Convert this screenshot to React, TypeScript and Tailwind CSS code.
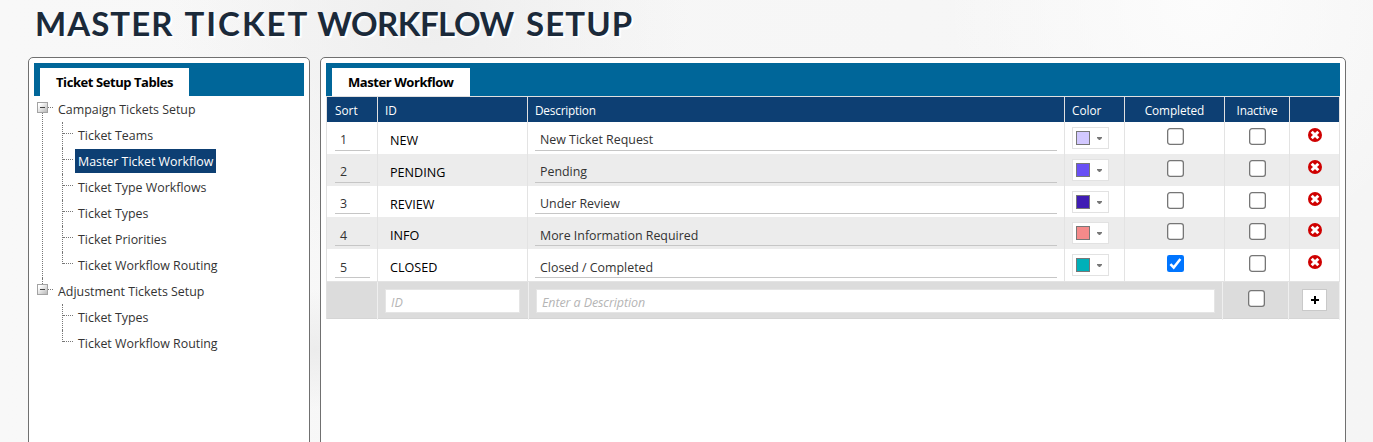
import React from "react";

type Child = { label: string; active?: boolean };

const campaign: Child[] = [
  { label: "Ticket Teams" },
  { label: "Master Ticket Workflow", active: true },
  { label: "Ticket Type Workflows" },
  { label: "Ticket Types" },
  { label: "Ticket Priorities" },
  { label: "Ticket Workflow Routing" },
];

const adjustment: Child[] = [{ label: "Ticket Types" }, { label: "Ticket Workflow Routing" }];

const rows = [
  { id: "NEW", text: "New Ticket Request", color: "bg-[#d2c8ff]", done: false, h: "h-[32px]", line: "leading-[36px]" },
  { id: "PENDING", text: "Pending", color: "bg-[#6950f5]", done: false, h: "h-[32px]", line: "leading-[36px]" },
  { id: "REVIEW", text: "Under Review", color: "bg-[#3f1cb4]", done: false, h: "h-[31px]", line: "leading-[36px]" },
  { id: "INFO", text: "More Information Required", color: "bg-[#f58a8a]", done: false, h: "h-[32px]", line: "leading-[38px]" },
  { id: "CLOSED", text: "Closed / Completed", color: "bg-[#00b0b9]", done: true, h: "h-[32px]", line: "leading-[38px]" },
];

const columns = "grid grid-cols-[51px_150px_537px_60px_100px_65px_50px] grid-rows-[minmax(0,1fr)]";

function Toggle() {
  return (
    <svg width="11" height="11" viewBox="0 0 11 11" className="block shrink-0">
      <defs>
        <linearGradient id="toggle" x1="0" y1="0" x2="1" y2="1">
          <stop offset="0.2" stopColor="#ffffff" />
          <stop offset="1" stopColor="#b4b4b4" />
        </linearGradient>
      </defs>
      <rect x="0.5" y="0.5" width="10" height="10" fill="url(#toggle)" stroke="#a3a3a3" />
      <path d="M3 5.5h5" stroke="#444" />
    </svg>
  );
}

function Branch({ label, items, first }: { label: string; items: Child[]; first?: boolean }) {
  return (
    <div className="flex pl-[3px]">
      <div className="flex w-[11px] flex-col">
        <div className={first ? "h-[6px]" : "ml-[5px] h-[6px] w-px border-l border-dotted border-[#777]"} />
        <Toggle />
        {first && <div className="ml-[5px] w-px flex-1 border-l border-dotted border-[#777]" />}
      </div>
      <div className="flex-1">
        <div className="flex h-[26px]">
          <div className="h-[12px] w-[5px] border-b border-dotted border-[#777]" />
          <div className="ml-[5px] leading-[28px] whitespace-nowrap">{label}</div>
        </div>
        {items.map((c, i) => (
          <div key={c.label} className="flex h-[26px] pl-[14px]">
            <div
              className={
                i === items.length - 1
                  ? "h-[12px] w-px border-l border-dotted border-[#777]"
                  : "h-[26px] w-px border-l border-dotted border-[#777]"
              }
            />
            <div className="h-[12px] w-[10px] border-b border-dotted border-[#777]" />
            <div
              className={
                "ml-[2px] mt-[1px] h-[24px] px-[3px] leading-[26px] whitespace-nowrap" +
                (c.active ? " w-[141px] bg-[#0d3f73] text-white" : "")
              }
            >
              {c.label}
            </div>
          </div>
        ))}
      </div>
    </div>
  );
}

function Check({ on }: { on?: boolean }) {
  return (
    <svg width="17" height="17" viewBox="0 0 17 17" className="block">
      {on ? (
        <>
          <rect width="17" height="17" rx="2.2" fill="#0075ff" />
          <path d="M3.4 9.2l3.3 3.3 6.7-8.6" fill="none" stroke="#fff" strokeWidth="2.5" />
        </>
      ) : (
        <rect x="0.65" y="0.65" width="15.7" height="15.7" rx="2.4" fill="#fff" stroke="#767676" strokeWidth="1.3" />
      )}
    </svg>
  );
}

function DeleteIcon() {
  return (
    <svg width="14" height="14" viewBox="0 0 14 14" className="block">
      <circle cx="7" cy="7" r="7" fill="#cf0000" />
      <path d="M3.7 3.7l6.6 6.6M10.3 3.7l-6.6 6.6" stroke="#fff" strokeWidth="2.9" />
    </svg>
  );
}

function Tab({ children, className }: { children: React.ReactNode; className: string }) {
  return (
    <div className="flex h-[33px] bg-[#006699] pl-[6px] pt-[5px]">
      <div className={"bg-white pl-[16px] text-[13px] leading-[29px] font-bold whitespace-nowrap text-black " + className}>
        {children}
      </div>
    </div>
  );
}

const panel = "h-[420px] shrink-0 rounded-[5px] border border-[#707070] bg-white p-[5px]";

export default function App() {
  return (
    <div className="h-[442px] w-[1373px] overflow-hidden bg-[#f6f6f6] bg-[radial-gradient(circle_at_430px_20px,#eeeeee_0,#eeeeee00_260px),radial-gradient(circle_at_315px_350px,#ececec_0,#eeeeee00_60px),radial-gradient(circle_at_1200px_0px,#fcfcfc_0,#fcfcfc00_260px),linear-gradient(90deg,#f8f8f8,#f5f5f5)] font-['Open_Sans',sans-serif] text-[12.4px] text-[#333]">
      <h1 className="flex h-[57px] pl-[35px] font-['Lato',sans-serif] text-[33px] leading-[46px] font-bold whitespace-pre text-[#1b2a3a] [text-shadow:2px_2px_1px_#fff]">
        <span className="w-[149.5px] tracking-[1.05px]">{"MASTER "}</span>
        <span className="w-[132.7px] tracking-[2px]">{"TICKET "}</span>
        <span className="w-[208.8px] tracking-[-0.5px]">{"WORKFLOW "}</span>
        <span className="tracking-[1.1px]">SETUP</span>
      </h1>
      <div className="flex gap-[10px] pl-[28px]">
        <div className={panel + " w-[282px]"}>
          <Tab className="w-[149px] tracking-[-0.43px]">Ticket Setup Tables</Tab>
          <Branch label="Campaign Tickets Setup" items={campaign} first />
          <Branch label="Adjustment Tickets Setup" items={adjustment} />
        </div>
        <div className={panel + " w-[1026px]"}>
          <Tab className="w-[138px] tracking-[-0.43px]">Master Workflow</Tab>
          <div className="w-[1014px] border-l border-[#e0e0e0]">
            <div
              className={
                columns +
                " h-[26px] border-t border-[#e0e0e0] text-[11.8px] leading-[26px] text-white [&>div]:border-r [&>div]:border-[#e0e0e0] [&>div]:bg-[#0d3f73]"
              }
            >
              <div className="pl-[8px]">Sort</div>
              <div className="pl-[7px]">ID</div>
              <div className="pl-[7px] tracking-[-0.2px]">Description</div>
              <div className="pl-[7px]">Color</div>
              <div className="text-center tracking-[-0.1px]">Completed</div>
              <div className="text-center tracking-[-0.2px]">Inactive</div>
              <div />
            </div>
            {rows.map((r, i) => (
              <div
                key={r.id}
                className={
                  columns + " " + r.h + " [&>div]:border-r [&>div]:border-[#e3e3e3] " + (i % 2 ? "bg-[#ececec]" : "bg-white")
                }
              >
                <div className="flex pr-[7px] pb-[3px] pl-[8px]">
                  <div className={"flex-1 border-b border-[#c6c6c6] pl-[5px] " + r.line}>{i + 1}</div>
                </div>
                <div className="pl-[12px] text-[12.6px] leading-[37px] text-black">{r.id}</div>
                <div className="flex pr-[7px] pb-[3px] pl-[7px]">
                  <div className={"flex-1 border-b border-[#c6c6c6] pl-[5px] " + r.line}>{r.text}</div>
                </div>
                <div className="pt-[5px] pl-[7px]">
                  <div className="flex h-[22px] w-[37px] items-center border border-[#e2e2e2] bg-white pl-[3px]">
                    <div className={"h-[14px] w-[14px] border border-[#777] " + r.color} />
                    <svg width="5" height="3" viewBox="0 0 5 3" className="ml-[7px] mt-[1px]">
                      <path d="M0 0h5v1L3 3H2L0 1z" fill="#777" />
                    </svg>
                  </div>
                </div>
                <div className="pt-[6px] pl-[42px]">
                  <Check on={r.done} />
                </div>
                <div className="pt-[6px] pl-[24px]">
                  <Check />
                </div>
                <div className="pt-[6px] pl-[18px]">
                  <DeleteIcon />
                </div>
              </div>
            ))}
            <div className="grid h-[38px] grid-cols-[51px_151px_694px_66px_51px] border-y border-t-[#e3e3e3] border-b-[#d5d5d5] bg-[#dcdcdc] [&>div]:border-r [&>div]:border-[#efefef]">
              <div />
              <div className="py-[7px] pl-[7px]">
                <div className="h-[24px] w-[135px] border border-[#e5e5e5] bg-white pl-[5px] text-[12.5px] leading-[25px] text-[#b5b5b5] italic">
                  ID
                </div>
              </div>
              <div className="py-[7px] pl-[7px]">
                <div className="h-[24px] w-[679px] border border-[#e5e5e5] bg-white pl-[5px] text-[12.5px] leading-[25px] tracking-[-0.1px] text-[#b5b5b5] italic">
                  Enter a Description
                </div>
              </div>
              <div className="pt-[8px] pl-[25px]">
                <Check />
              </div>
              <div className="pt-[7px] pl-[13px]">
                <div className="flex h-[22px] w-[25px] items-center justify-center border border-[#c9c9c9] bg-white">
                  <svg width="8" height="8" viewBox="0 0 8 8">
                    <path d="M0 4h8M4 0v8" stroke="#000" strokeWidth="2" />
                  </svg>
                </div>
              </div>
            </div>
          </div>
        </div>
      </div>
    </div>
  );
}
